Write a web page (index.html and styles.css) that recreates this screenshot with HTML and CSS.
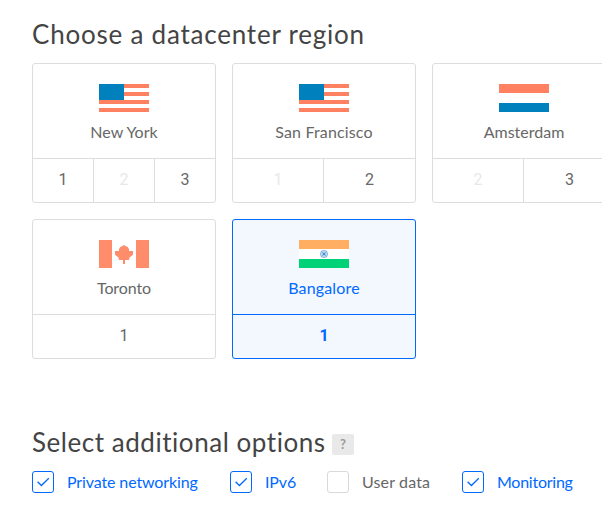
FILE: index.html
```
<!DOCTYPE html>
<html lang="en">
<head>
<meta charset="utf-8">
<title>Create Droplet</title>
<link rel="stylesheet" href="styles.css">
</head>
<body>
<svg class="defs" width="0" height="0" aria-hidden="true">
  <symbol id="flag-us" viewBox="0 0 50 28"><path fill="#fff" d="M0 0h50v28H0z"/><path fill="#ff8161" d="M0 0h50v4H0zM0 8h50v4H0zM0 16h50v4H0zM0 24h50v4H0z"/><path fill="#0080bd" d="M0 0h25v16H0z"/></symbol>
  <symbol id="flag-nl" viewBox="0 0 50 28"><path fill="#fff" d="M0 0h50v28H0z"/><path fill="#ff8161" d="M0 0h50v9H0z"/><path fill="#0080bd" d="M0 19h50v9H0z"/></symbol>
  <symbol id="flag-ca" viewBox="0 0 50 28"><path fill="#fff" d="M0 0h50v28H0z"/><path fill="#ff8d6b" d="M0 0h13v28H0zM37 0h13v28H37zM25 5l1.500 1 2.200.9 1.300 2.100v2h4v3.500l-1.500 1.500-2 1.500-.5 2.500h-4v4h-2v-4h-4l-.5-2.500-2-1.500-1.500-1.500V11h4V9l1.300-2.100L23.500 6z"/></symbol>
  <symbol id="flag-in" viewBox="0 0 50 28"><path fill="#fff" d="M0 0h50v28H0z"/><path fill="#ffae62" d="M0 0h50v9H0z"/><path fill="#00d277" d="M0 19h50v9H0z"/><circle cx="25" cy="14" r="3.600" fill="#c3dbf1" stroke="#8fbbe2" stroke-width="1"/><path stroke="#78aedb" stroke-width="1" d="M22.300 11.300l5.400 5.400M27.700 11.300l-5.400 5.400"/><circle cx="25" cy="14" r="1.300" fill="#3f8ed0"/></symbol>
  <symbol id="check" viewBox="0 0 20 20"><path fill="none" stroke="#0069ff" stroke-width="1.300" d="M4.600 9.800l3.800 3.700 7.400-7.300"/></symbol>
</svg>
<main class="page">
  <h2 class="title title-region">Choose a datacenter region</h2>
  <div class="regions">
    <section class="region">
      <div class="region-head"><svg class="flag"><use href="#flag-us"/></svg><span class="name">New York</span></div>
      <div class="slots three"><span>1</span><span class="off">2</span><span>3</span></div>
    </section>
    <section class="region">
      <div class="region-head"><svg class="flag"><use href="#flag-us"/></svg><span class="name wide">San Francisco</span></div>
      <div class="slots"><span class="off">1</span><span>2</span></div>
    </section>
    <section class="region">
      <div class="region-head"><svg class="flag"><use href="#flag-nl"/></svg><span class="name">Amsterdam</span></div>
      <div class="slots"><span class="off">2</span><span>3</span></div>
    </section>
    <section class="region">
      <div class="region-head"><svg class="flag"><use href="#flag-ca"/></svg><span class="name tight">Toronto</span></div>
      <div class="slots"><span>1</span></div>
    </section>
    <section class="region selected">
      <div class="region-head"><svg class="flag"><use href="#flag-in"/></svg><span class="name wide">Bangalore</span></div>
      <div class="slots"><span>1</span></div>
    </section>
  </div>
  <div class="options-head"><h2 class="title title-options">Select additional options</h2><span class="help">?</span></div>
  <div class="options">
    <label class="option checked"><span class="box"><svg><use href="#check"/></svg></span><span class="tight">Private networking</span></label>
    <label class="option checked"><span class="box"><svg><use href="#check"/></svg></span><span class="tight">IPv6</span></label>
    <label class="option"><span class="box"></span><span class="wide">User data</span></label>
    <label class="option checked"><span class="box"><svg><use href="#check"/></svg></span><span class="tighter">Monitoring</span></label>
  </div>
</main>
</body>
</html>
```
FILE: styles.css
```
* { box-sizing: border-box; }
body { margin: 0; background: #fff; overflow: hidden; color: #676767; font: 16px/20px Lato, "Liberation Sans", sans-serif; }
svg { display: block; }
.defs { position: absolute; }
.page { padding: 18px 0 0 32px; white-space: nowrap; }
.title { margin: 0; font-size: 26px; line-height: 32px; font-weight: 400; color: #444; }
.title-region { letter-spacing: .78px; }
.title-options { width: 300px; letter-spacing: .54px; }
.regions { display: grid; grid-template-columns: repeat(3, 184px); gap: 16px; margin-top: 13px; }
.region { height: 140px; border: 1px solid #ddd; border-radius: 3px; }
.region-head { height: 94px; padding-top: 20px; display: flex; flex-direction: column; align-items: center; gap: 10px; }
.flag { width: 50px; height: 28px; }
.wide { letter-spacing: .15px; }
.tight { letter-spacing: -.12px; }
.tighter { letter-spacing: -.25px; }
.slots { display: grid; grid-auto-flow: column; grid-auto-columns: 1fr; height: 44px; border-top: 1px solid #ddd; line-height: 42px; text-align: center; font-family: Roboto, sans-serif; }
.three { grid-template-columns: 61px 61px 60px; }
.slots span { border-right: 1px solid #ddd; }
.slots span:last-child { border-right: 0; }
.slots .off { color: #e8e8e8; }
.selected { color: #0069ff; background: #f3f8ff; border-color: #0069ff; }
.selected .slots { border-color: #0069ff; font-weight: 700; }
.options-head { display: flex; margin-top: 67px; height: 32px; }
.help { margin-top: 8px; width: 22px; height: 21px; border-radius: 2px; background: #e9e9e9; color: #999; font-size: 13px; font-weight: 700; line-height: 21px; text-align: center; }
.options { display: grid; grid-template-columns: 198px 97px 135px 150px; margin-top: 13px; }
.option { display: flex; gap: 13px; line-height: 22px; }
.box { flex: none; width: 22px; height: 22px; border: 1px solid #d9d9d9; border-radius: 3px; }
.box svg { width: 20px; height: 20px; }
.checked { color: #0069ff; }
.checked .box { border-color: #0069ff; }
```
